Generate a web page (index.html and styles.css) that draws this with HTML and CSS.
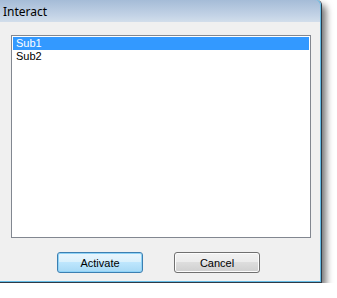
FILE: index.html
```html
<!DOCTYPE html>
<html lang="en">
<head>
	<meta charset="UTF-8">
	<title>Interact</title>
	<link rel="stylesheet" href="styles.css">
</head>
<body>
	<div class="dialog">
		<div class="titlebar">Interact</div>
		<div class="client">
			<ul class="listbox">
				<li class="item selected">Sub1</li>
				<li class="item">Sub2</li>
			</ul>
			<div class="buttons">
				<button class="btn default">Activate</button>
				<button class="btn">Cancel</button>
			</div>
		</div>
	</div>
</body>
</html>
```

FILE: styles.css
```css
body {
	margin: 0;
	background: #fff;
	font-family: "Liberation Sans", Arial, sans-serif;
	font-size: 11px;
}
.dialog {
	width: 321px;
	height: 282px;
	display: flex;
	flex-direction: column;
	background: #f0f0f0;
	border-right: 1px solid #2e3b48;
	border-bottom: 1px solid #2e3b48;
	border-top-right-radius: 5px;
	box-shadow: inset -1px -1px 0 #66bde6, 4px 5px 7px rgba(0, 0, 0, 0.55);
}
.titlebar {
	height: 22px;
	padding-left: 3px;
	line-height: 23px;
	font-family: "Noto Sans", "Open Sans", sans-serif;
	font-size: 12px;
	color: #000;
	background: linear-gradient(to bottom, #a5bcd7, #c3d3e6 70%, #d2deeb);
	border-top-right-radius: 5px;
	box-shadow: inset -1px 0 0 #66bde6;
}
.client {
	flex: 1;
	display: flex;
	flex-direction: column;
	padding: 13px 11px 0 11px;
}
.listbox {
	margin: 0;
	padding: 1px;
	list-style: none;
	height: 199px;
	width: 296px;
	background: #fff;
	border: 1px solid #828790;
}
.item {
	height: 13px;
	line-height: 13px;
	padding-left: 3px;
	color: #000;
}
.item.selected {
	background: #3399ff;
	color: #fff;
}
.buttons {
	display: flex;
	gap: 31px;
	padding: 14px 0 0 46px;
}
.btn {
	width: 86px;
	height: 21px;
	padding: 0;
	font-family: "Liberation Sans", Arial, sans-serif;
	font-size: 11px;
	color: #000;
	border: 1px solid #707070;
	border-radius: 3px;
	background: linear-gradient(to bottom, #f2f2f2, #ebebeb 50%, #dddddd 50%, #cfcfcf);
	box-shadow: inset 0 0 0 1px #fcfcfc;
}
.btn.default {
	border-color: #3c7fb1;
	background: linear-gradient(to bottom, #eaf6fd, #d9f0fc 50%, #bee6fd 50%, #a7d9f5);
	box-shadow: inset 0 0 0 1px #8fd3f7;
}
```
